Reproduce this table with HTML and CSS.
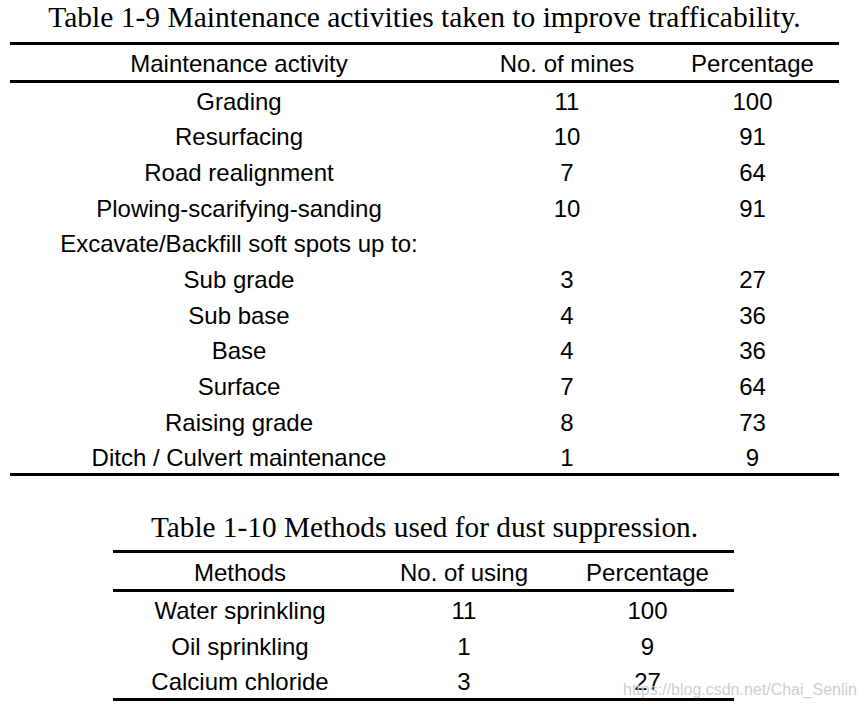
FILE: index.html
```html
<!DOCTYPE html>
<html lang="en">
<head>
<meta charset="utf-8">
<title>Maintenance tables</title>
<link rel="stylesheet" href="styles.css">
</head>
<body>
<main class="page">
  <section class="block block-first">
    <h2 class="caption caption-first">Table 1-9 Maintenance activities taken to improve trafficability.</h2>
    <table class="tbl tbl-wide">
      <colgroup>
        <col class="c1"><col class="c2"><col class="c3">
      </colgroup>
      <thead>
        <tr><th>Maintenance activity</th><th>No. of mines</th><th>Percentage</th></tr>
      </thead>
      <tbody>
        <tr><td>Grading</td><td>11</td><td>100</td></tr>
        <tr><td>Resurfacing</td><td>10</td><td>91</td></tr>
        <tr><td>Road realignment</td><td>7</td><td>64</td></tr>
        <tr><td>Plowing-scarifying-sanding</td><td>10</td><td>91</td></tr>
        <tr><td>Excavate/Backfill soft spots up to:</td><td></td><td></td></tr>
        <tr><td>Sub grade</td><td>3</td><td>27</td></tr>
        <tr><td>Sub base</td><td>4</td><td>36</td></tr>
        <tr><td>Base</td><td>4</td><td>36</td></tr>
        <tr><td>Surface</td><td>7</td><td>64</td></tr>
        <tr><td>Raising grade</td><td>8</td><td>73</td></tr>
        <tr class="last"><td>Ditch / Culvert maintenance</td><td>1</td><td>9</td></tr>
      </tbody>
    </table>
  </section>

  <section class="block block-second">
    <h2 class="caption caption-second">Table 1-10 Methods used for dust suppression.</h2>
    <table class="tbl tbl-narrow">
      <colgroup>
        <col class="d1"><col class="d2"><col class="d3">
      </colgroup>
      <thead>
        <tr><th>Methods</th><th>No. of using</th><th>Percentage</th></tr>
      </thead>
      <tbody>
        <tr><td>Water sprinkling</td><td>11</td><td>100</td></tr>
        <tr><td>Oil sprinkling</td><td>1</td><td>9</td></tr>
        <tr><td>Calcium chloride</td><td>3</td><td>27</td></tr>
      </tbody>
    </table>
  </section>
</main>
<div class="watermark">https://blog.csdn.net/Chai_Senlin</div>
</body>
</html>
```

FILE: styles.css
```css
html, body {
  margin: 0;
  padding: 0;
  background: #ffffff;
}

body {
  width: 864px;
  height: 712px;
  overflow: hidden;
  position: relative;
  color: #000000;
}

.page {
  width: 829px;
  margin-left: 10px;
  display: flex;
  flex-direction: column;
  align-items: center;
}

.block {
  width: 100%;
  display: flex;
  flex-direction: column;
  align-items: center;
}

.caption {
  margin: 0;
  font-family: "Liberation Serif", "Times New Roman", serif;
  font-weight: normal;
  line-height: 34px;
  height: 34px;
  white-space: nowrap;
  text-align: center;
}

.caption-first {
  font-size: 29.5px;
  margin-bottom: 8px;
}

.block-second {
  margin-top: 34px;
}

.caption-second {
  font-size: 29.3px;
  margin-bottom: 6px;
}

.tbl {
  border-collapse: separate;
  border-spacing: 0;
  font-family: "Liberation Sans", Arial, sans-serif;
  font-size: 24px;
  table-layout: fixed;
  border-top: 3px solid #000;
  border-bottom: 3px solid #000;
}

.tbl th,
.tbl td {
  box-sizing: border-box;
  padding: 0;
  font-weight: normal;
  text-align: center;
  white-space: nowrap;
  line-height: 24px;
  vertical-align: top;
}

.tbl th {
  border-bottom: 3px solid #000;
}

/* Table 1-9 */
.tbl-wide {
  width: 829px;
}

.tbl-wide th {
  height: 38px;
  padding-top: 7.3px;
}

.tbl-wide td {
  height: 35.67px;
  padding-top: 6.7px;
}

.tbl-wide .last td {
  height: 33px;
}

.c1 { width: 458px; }
.c2 { width: 198px; }
.c3 { width: 173px; }

/* Table 1-10 */
.tbl-narrow {
  width: 621px;
  margin-left: -2px;
}

.tbl-narrow th {
  height: 39px;
  padding-top: 8px;
}

.tbl-narrow td {
  height: 35.4px;
  padding-top: 7.7px;
}

.d1 { width: 254px; }
.d2 { width: 194px; }
.d3 { width: 173px; }

.watermark {
  position: absolute;
  left: 623px;
  top: 680px;
  font-family: "Liberation Sans", Arial, sans-serif;
  font-size: 16px;
  line-height: 20px;
  color: rgba(190, 190, 190, 0.75);
  white-space: nowrap;
  text-shadow: 0 0 1px rgba(255, 255, 255, 0.6);
}
```
